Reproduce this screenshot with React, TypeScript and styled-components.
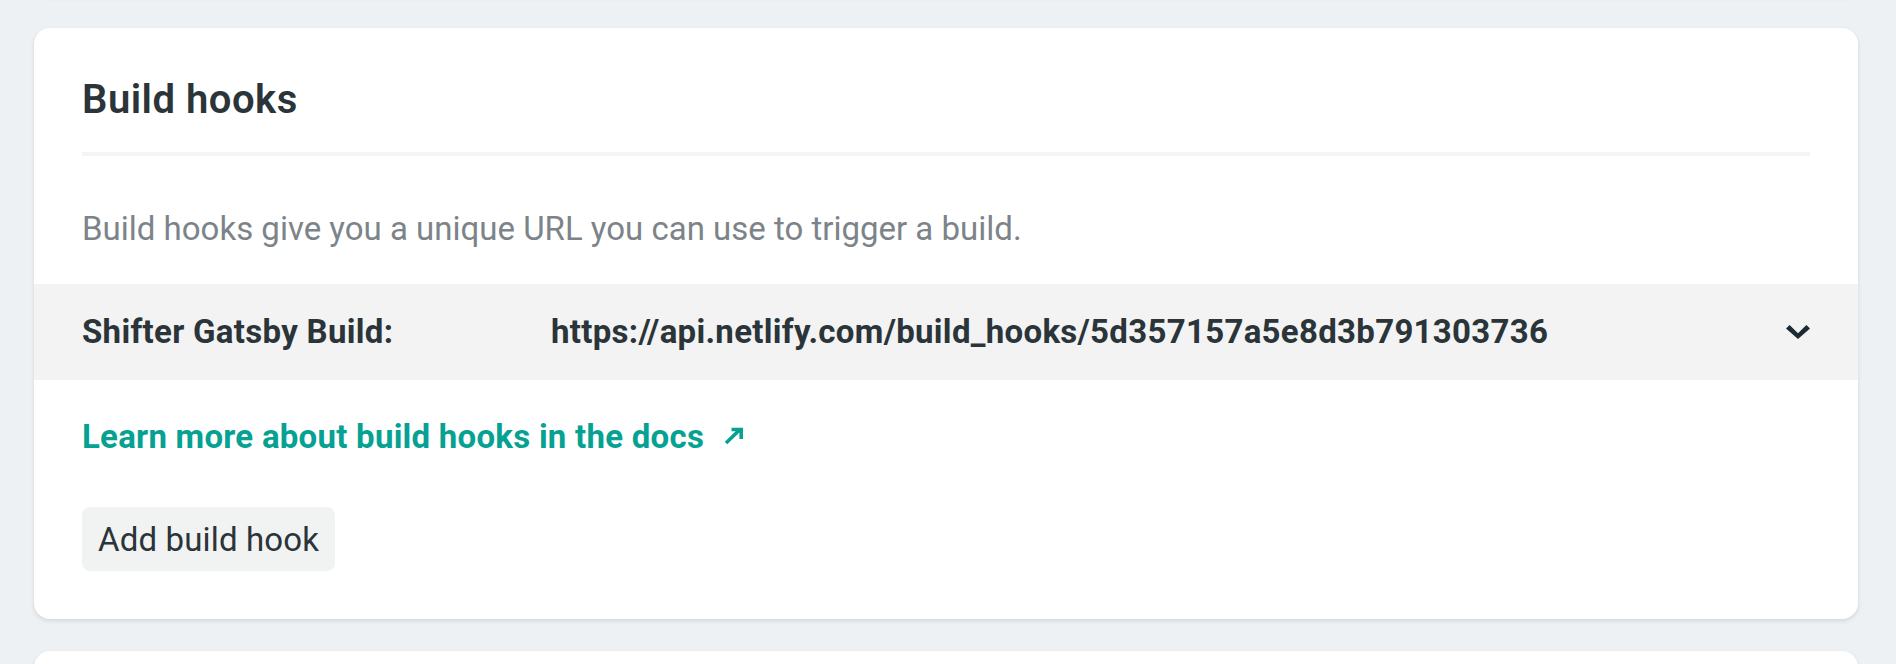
import React from "react";
import styled, { createGlobalStyle } from "styled-components";

const GlobalStyle = createGlobalStyle`
  html, body {
    margin: 0;
    padding: 0;
    background: #eef1f4;
  }
  body {
    font-family: Roboto, "Liberation Sans", Arial, sans-serif;
    color: #2a3439;
    -webkit-font-smoothing: antialiased;
  }
`;

const Page = styled.main`
  display: flex;
  flex-direction: column;
  gap: 32px;
  padding: 0 38px 0 34px;
  height: 664px;
  overflow: hidden;
`;

const Card = styled.section`
  flex-shrink: 0;
  background: #ffffff;
  border-radius: 16px;
  box-shadow: 0 2px 4px 0 rgba(14, 30, 37, 0.12);
  padding: 48px 0;
`;

const PreviousCard = styled(Card)`
  height: 120px;
  padding: 0;
  margin-top: -124px;
`;

const Section = styled.div`
  padding: 0 48px;
`;

const Title = styled.h2`
  margin: 0;
  padding-bottom: 28px;
  border-bottom: 4px solid #f5f5f5;
  font-size: 40px;
  line-height: 48px;
  font-weight: 600;
  letter-spacing: 0.5px;
  color: #2a3439;
`;

const Description = styled.p`
  margin: 48px 0 30px;
  font-size: 33px;
  line-height: 1.5;
  font-weight: 400;
  color: #7c8489;
`;

const HookRow = styled.div`
  display: grid;
  grid-template-columns: 469px 1fr auto;
  align-items: center;
  height: 96px;
  padding: 0 48px;
  background: #f3f3f3;
  font-size: 33px;
  font-weight: 700;
  letter-spacing: 0.3px;
  color: #2a3439;
`;

const HookLabel = styled.span``;

const HookUrl = styled.span`
  white-space: nowrap;
`;

const ToggleButton = styled.button`
  display: flex;
  align-items: center;
  justify-content: center;
  padding: 0;
  border: 0;
  background: none;
  color: #1b2a33;
  cursor: pointer;
`;

const DocsLink = styled.a`
  display: inline-flex;
  align-items: center;
  gap: 20px;
  margin-top: 32px;
  font-size: 33px;
  line-height: 1.5;
  font-weight: 700;
  letter-spacing: 0.25px;
  color: #05a192;
  text-decoration: none;
`;

const Actions = styled.div`
  margin-top: 46px;
`;

const Button = styled.button`
  height: 64px;
  padding: 0 16px;
  border: 0;
  border-radius: 8px;
  background: #f1f2f2;
  font-family: inherit;
  font-size: 33px;
  font-weight: 400;
  letter-spacing: 0.15px;
  color: #2a3439;
  cursor: pointer;
`;

const Chevron = () => (
  <svg width="24" height="14" viewBox="0 0 24 14" aria-hidden="true">
    <path d="M0 3.6 L3.6 0 L12 8.2 L20.4 0 L24 3.6 L12 14 Z" fill="currentColor" />
  </svg>
);

const ExternalArrow = () => (
  <svg width="20" height="18" viewBox="0 0 20 18" aria-hidden="true">
    <path
      d="M2 16 L16 2.5 M7.5 2.5 H17.2 V12"
      fill="none"
      stroke="currentColor"
      strokeWidth="3.6"
    />
  </svg>
);

export default function App() {
  return (
    <>
      <GlobalStyle />
      <Page>
        <PreviousCard />
        <Card>
          <Section>
            <Title>Build hooks</Title>
            <Description>
              Build hooks give you a unique URL you can use to trigger a build.
            </Description>
          </Section>
          <HookRow>
            <HookLabel>Shifter Gatsby Build:</HookLabel>
            <HookUrl>https://api.netlify.com/build_hooks/5d357157a5e8d3b791303736</HookUrl>
            <ToggleButton aria-label="Show details">
              <Chevron />
            </ToggleButton>
          </HookRow>
          <Section>
            <DocsLink href="#">
              Learn more about build hooks in the docs
              <ExternalArrow />
            </DocsLink>
            <Actions>
              <Button>Add build hook</Button>
            </Actions>
          </Section>
        </Card>
        <Card />
      </Page>
    </>
  );
}
